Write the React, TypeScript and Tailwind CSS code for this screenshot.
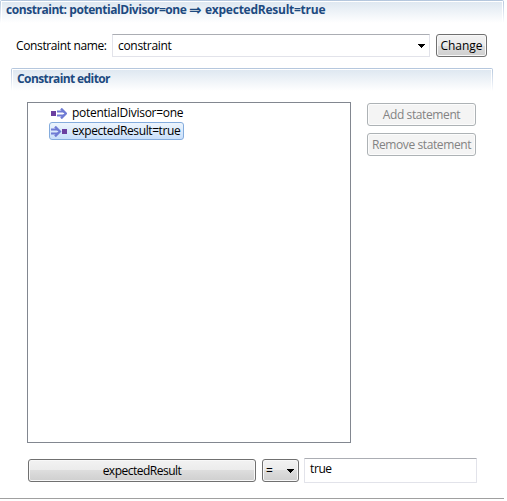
import type { ReactNode } from 'react';

function SectionHeader({ children, className }: { children: ReactNode; className: string }) {
  return (
    <div className={`flex bg-gradient-to-b from-[#b4c6dd] to-white px-px pt-px ${className}`}>
      <div className="flex-1 bg-white px-px pt-px">
        <div className="h-full bg-gradient-to-b from-[#dfe8f1] to-white font-bold text-[#1d4a80]">{children}</div>
      </div>
    </div>
  );
}

function Button({ children, className }: { children: ReactNode; className: string }) {
  return (
    <button
      className={`flex items-center rounded-[3px] border border-[#707070] bg-[linear-gradient(to_bottom,#f2f2f2_0%,#ebebeb_50%,#dddddd_50%,#cfcfcf_100%)] shadow-[inset_0_0_0_1px_#f8f8f8] ${className}`}
    >
      {children}
    </button>
  );
}

function DisabledButton({ children }: { children: ReactNode }) {
  return (
    <button
      disabled
      className="flex h-[23px] w-[109px] items-center justify-center rounded-[3px] border border-[#adb2b5] bg-[#f4f4f4] tracking-[-0.39px] text-[#838383] shadow-[inset_0_0_0_1px_#fcfcfc]"
    >
      {children}
    </button>
  );
}

function Caret() {
  return (
    <svg width="7" height="4" viewBox="0 0 7 4" shapeRendering="crispEdges">
      <path d="M0 0H7V1H6V2H5V3H4V4H3V3H2V2H1V1H0Z" fill="#000" />
    </svg>
  );
}

function StatementIcon({ kind }: { kind: 'premise' | 'consequence' }) {
  const premise = kind === 'premise';
  return (
    <svg width="16" height="11" viewBox="0 0 16 11" className="shrink-0">
      <rect x={premise ? 0 : 11} y="3" width="5" height="5" fill="#6b3fa0" />
      <g transform={premise ? 'translate(6 0)' : 'translate(0 0)'} fill="none" stroke="#6f7bd4">
        <path d="M0 3.5H7M0 7.5H7" strokeWidth="1.8" />
        <path d="M4 .6L8.9 5.5L4 10.4" strokeWidth="2.3" />
      </g>
    </svg>
  );
}

export default function App() {
  return (
    <div className="h-[501px] w-[507px] overflow-hidden bg-white font-['Open_Sans','Noto_Sans',sans-serif] text-[12px] leading-4 whitespace-nowrap text-black">
      <div className="h-[499px] w-[504px] border-b border-[#a0a0a0]">
        <SectionHeader className="h-[23px] rounded-t-[2px]">
          <div className="flex pl-1">
            <span className="w-[183px] tracking-[-0.45px]">constraint: potentialDivisor=one</span>
            <span className="w-4 font-['DejaVu_Sans'] text-[15px]">⇒</span>
            <span className="tracking-[-0.25px]">expectedResult=true</span>
          </div>
        </SectionHeader>

        <div className="mt-[11px] flex h-[23px] pl-4">
          <label className="w-[96px] pt-[4px] tracking-[-0.37px]">Constraint name:</label>
          <div className="flex w-[318px] items-center justify-between border border-[#e2e3ea] border-t-[#abadb3] pr-1 pl-[5px]">
            <span className="tracking-[-0.3px]">constraint</span>
            <Caret />
          </div>
          <Button className="ml-[6px] w-[51px] justify-center">Change</Button>
        </div>

        <div className="mt-[11px] ml-[11px] w-[482px]">
          <SectionHeader className="h-[23px] rounded-t-[2px]">
            <div className="pt-px pl-1 tracking-[-0.6px]">Constraint editor</div>
          </SectionHeader>

          <div className="mt-[11px] flex gap-4 pl-4">
            <div className="h-[341px] w-[324px] border border-[#828790] pl-[21px]">
              <div className="mt-px flex h-[18px] items-center gap-[5px] pl-[2px]">
                <StatementIcon kind="premise" />
                <span className="tracking-[-0.27px]">potentialDivisor=one</span>
              </div>
              <div className="flex h-[18px] w-[135px] items-center gap-[5px] rounded-[3px] border border-[#84acdd] bg-gradient-to-b from-[#edf5fd] to-[#c9dffa] pl-px">
                <StatementIcon kind="consequence" />
                <span className="tracking-[-0.4px]">expectedResult=true</span>
              </div>
            </div>
            <div className="flex flex-col gap-[7px] pt-px">
              <DisabledButton>Add statement</DisabledButton>
              <DisabledButton>Remove statement</DisabledButton>
            </div>
          </div>

          <div className="mt-[15px] flex pl-[17px]">
            <Button className="mt-px h-[23px] w-[228px] justify-center tracking-[-0.5px]">expectedResult</Button>
            <Button className="mt-px ml-[6px] h-[23px] w-[37px] justify-between pr-1 pl-[3px]">
              <span>=</span>
              <Caret />
            </Button>
            <div className="ml-[5px] h-[25px] w-[173px] rounded-[1px] border border-[#e2e3ea] border-t-[#abadb3] pt-[2px] pl-[5px] tracking-[-0.4px]">
              true
            </div>
          </div>
        </div>
      </div>
    </div>
  );
}
